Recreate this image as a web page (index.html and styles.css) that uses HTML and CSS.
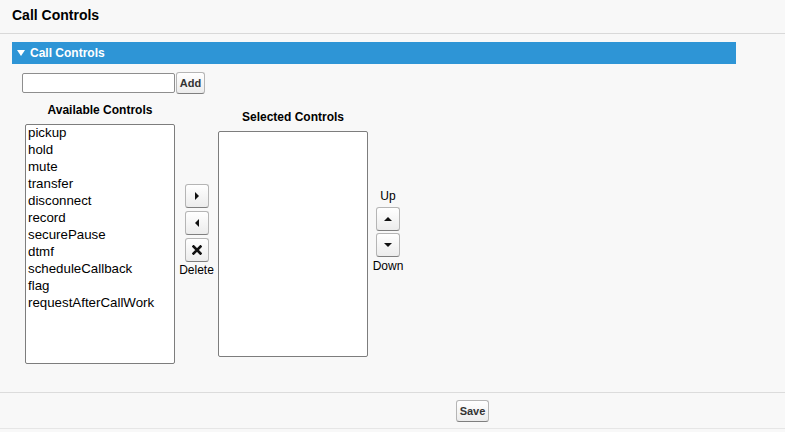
FILE: index.html
```html
<!DOCTYPE html>
<html>
<head>
<meta charset="utf-8">
<link rel="stylesheet" href="styles.css">
</head>
<body>
<div class="page-header"><h1 class="page-title">Call Controls</h1></div>
<div class="section-bar">
  <svg class="section-caret" width="8" height="6" viewBox="0 0 8 6"><path d="M0 0 L8 0 L4 6 Z" fill="#fff"/></svg>
  <span class="section-title">Call Controls</span>
</div>
<div class="add-row">
  <input class="add-input" type="text">
  <button class="btn btn-add">Add</button>
</div>
<div class="picker">
  <div class="pick-col">
    <div class="pick-label">Available Controls</div>
    <div class="list list-available">
      <div class="list-item">pickup</div>
      <div class="list-item">hold</div>
      <div class="list-item">mute</div>
      <div class="list-item">transfer</div>
      <div class="list-item">disconnect</div>
      <div class="list-item">record</div>
      <div class="list-item">securePause</div>
      <div class="list-item">dtmf</div>
      <div class="list-item">scheduleCallback</div>
      <div class="list-item">flag</div>
      <div class="list-item">requestAfterCallWork</div>
    </div>
  </div>
  <div class="ctrl-col ctrl-mid">
    <button class="btn icon-btn"><svg width="6" height="8" viewBox="0 0 6 8"><path d="M1 0 L5 4 L1 8 Z" fill="#111"/></svg></button>
    <button class="btn icon-btn"><svg width="6" height="8" viewBox="0 0 6 8"><path d="M5 0 L1 4 L5 8 Z" fill="#111"/></svg></button>
    <button class="btn icon-btn"><svg width="10" height="10" viewBox="0 0 10 10"><path d="M1.5 1.5 L8.5 8.5 M8.5 1.5 L1.5 8.5" stroke="#111" stroke-width="2.6" stroke-linecap="square"/></svg></button>
    <span class="ctrl-text">Delete</span>
  </div>
  <div class="pick-col">
    <div class="pick-label">Selected Controls</div>
    <div class="list list-selected"></div>
  </div>
  <div class="ctrl-col ctrl-order">
    <span class="ctrl-text">Up</span>
    <button class="btn icon-btn"><svg width="8" height="6" viewBox="0 0 8 6"><path d="M0 5 L4 1 L8 5 Z" fill="#111"/></svg></button>
    <button class="btn icon-btn"><svg width="8" height="6" viewBox="0 0 8 6"><path d="M0 1 L8 1 L4 5 Z" fill="#111"/></svg></button>
    <span class="ctrl-text">Down</span>
  </div>
</div>
<div class="footer">
  <button class="btn btn-save">Save</button>
</div>
</body>
</html>
```
FILE: styles.css
```css
html, body {
  margin: 0;
  padding: 0;
  background: #f8f8f8;
  font-family: "Liberation Sans", Arial, sans-serif;
  color: #000;
}
.page-header {
  height: 33px;
  border-bottom: 1px solid #d9d9d9;
  box-sizing: content-box;
}
.page-title {
  margin: 0;
  padding: 7px 0 0 12px;
  font-size: 14px;
  line-height: 17px;
  font-weight: bold;
}
.section-bar {
  margin: 8px 0 0 12px;
  width: 724px;
  height: 22px;
  background: #2e95d6;
  display: flex;
  align-items: center;
}
.section-caret {
  margin-left: 5px;
  margin-right: 5px;
}
.section-title {
  color: #fff;
  font-weight: bold;
  font-size: 12px;
  line-height: 22px;
}
.add-row {
  margin-top: 8px;
  padding-left: 22px;
  display: flex;
  align-items: center;
  height: 22px;
}
.add-input {
  width: 153px;
  height: 20px;
  box-sizing: border-box;
  border: 1px solid #8e8e8e;
  border-radius: 2px;
  background: #fff;
  margin: 0 1px 0 0;
  padding: 0 3px;
}
.btn {
  font-family: "Liberation Sans", Arial, sans-serif;
  border: 1px solid #b5b5b5;
  border-bottom-color: #7f7f7f;
  border-radius: 3px;
  background: linear-gradient(#ffffff, #ececec);
  color: #333;
  margin: 0;
  padding: 0;
  box-sizing: border-box;
  display: flex;
  align-items: center;
  justify-content: center;
}
.btn-add {
  width: 29px;
  height: 22px;
  font-size: 11px;
  font-weight: bold;
}
.picker {
  margin-top: 9px;
  padding-left: 25px;
  display: flex;
  align-items: center;
}
.pick-col {
  width: 150px;
  display: flex;
  flex-direction: column;
  align-items: center;
}
.pick-label {
  font-size: 12px;
  line-height: 14px;
  font-weight: bold;
  margin-bottom: 7px;
  white-space: nowrap;
}
.list {
  width: 150px;
  box-sizing: border-box;
  background: #fff;
  border: 1px solid #7d7d7d;
  border-radius: 2px;
  padding: 0 0 0 2px;
}
.list-available {
  height: 240px;
}
.list-selected {
  height: 226px;
}
.list-item {
  font-size: 13.3px;
  line-height: 17px;
  white-space: nowrap;
}
.list-item:first-child {
  margin-top: -1px;
}
.ctrl-col {
  display: flex;
  flex-direction: column;
  align-items: center;
  margin-bottom: 6px;
}
.ctrl-mid {
  width: 43px;
  gap: 3px;
}
.ctrl-mid .ctrl-text {
  margin-top: -2px;
}
.ctrl-order {
  width: 40px;
  gap: 2px;
}
.ctrl-order .ctrl-text:first-child {
  margin-bottom: 2px;
}
.icon-btn {
  width: 24px;
  height: 24px;
}
.ctrl-text {
  font-size: 12px;
  line-height: 14px;
}
.footer {
  margin-top: 28px;
  height: 35px;
  border-top: 1px solid #dcdcdc;
  border-bottom: 1px solid #e6e6e6;
  display: flex;
  align-items: center;
  padding-left: 456px;
}
.btn-save {
  width: 33px;
  height: 22px;
  font-size: 11px;
  font-weight: bold;
}
```
